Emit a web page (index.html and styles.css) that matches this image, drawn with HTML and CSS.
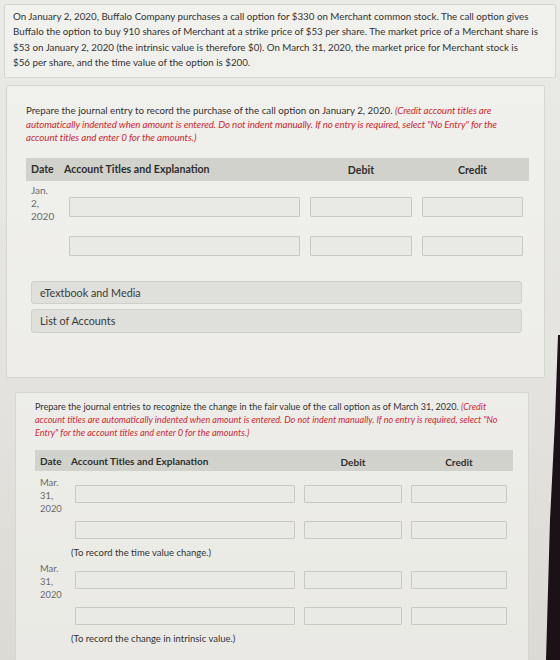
FILE: index.html
```html
<!DOCTYPE html>
<html lang="en">
<head>
    <meta charset="UTF-8">
    <meta name="viewport" content="width=device-width, initial-scale=1.0">
    <title>Call Option Journal Entries</title>
    <link rel="stylesheet" href="styles.css">
</head>
<body>

    <!-- Problem statement -->
    <div class="panel panel-intro">
        <p>On January 2, 2020, Buffalo Company purchases a call option for $330 on Merchant common stock. The call option gives Buffalo the option to buy 910 shares of Merchant at a strike price of $53 per share. The market price of a Merchant share is $53 on January 2, 2020 (the intrinsic value is therefore $0). On March 31, 2020, the market price for Merchant stock is $56&nbsp;per share, and the time value of the option is $200.</p>
    </div>

    <!-- Part 1: purchase of the option -->
    <div class="panel panel-part1">
        <p class="prompt">Prepare the journal entry to record the purchase of the call option on January 2, 2020. <em class="note">(Credit account titles are automatically indented when amount is entered. Do not indent manually. If no entry is required, select "No Entry" for the account titles and enter 0 for the amounts.)</em></p>

        <div class="journal">
            <div class="journal-head">
                <span>Date</span>
                <span class="col-account">Account Titles and Explanation</span>
                <span class="col-amount">Debit</span>
                <span class="col-amount">Credit</span>
            </div>
            <div class="journal-row">
                <div class="date">Jan.<br>2,<br>2020</div>
                <input class="field" type="text">
                <input class="field" type="text">
                <input class="field" type="text">
            </div>
            <div class="journal-row">
                <div class="date"></div>
                <input class="field" type="text">
                <input class="field" type="text">
                <input class="field" type="text">
            </div>
        </div>

        <div class="links">
            <div class="link-bar">eTextbook and Media</div>
            <div class="link-bar">List of Accounts</div>
        </div>
    </div>

    <!-- Part 2: change in fair value -->
    <div class="panel panel-part2">
        <p class="prompt">Prepare the journal entries to recognize the change in the fair value of the call option as of March 31, 2020. <em class="note">(Credit account titles are automatically indented when amount is entered. Do not indent manually. If no entry is required, select "No Entry" for the account titles and enter 0 for the amounts.)</em></p>

        <div class="journal">
            <div class="journal-head">
                <span>Date</span>
                <span class="col-account">Account Titles and Explanation</span>
                <span class="col-amount">Debit</span>
                <span class="col-amount">Credit</span>
            </div>
            <div class="journal-row">
                <div class="date">Mar.<br>31,<br>2020</div>
                <input class="field" type="text">
                <input class="field" type="text">
                <input class="field" type="text">
            </div>
            <div class="journal-row">
                <div class="date"></div>
                <input class="field" type="text">
                <input class="field" type="text">
                <input class="field" type="text">
            </div>
            <div class="entry-note">(To record the time value change.)</div>
            <div class="journal-row">
                <div class="date">Mar.<br>31,<br>2020</div>
                <input class="field" type="text">
                <input class="field" type="text">
                <input class="field" type="text">
            </div>
            <div class="journal-row">
                <div class="date"></div>
                <input class="field" type="text">
                <input class="field" type="text">
                <input class="field" type="text">
            </div>
            <div class="entry-note">(To record the change in intrinsic value.)</div>
        </div>
    </div>

    <!-- monitor bezel creeping in at the right edge -->
    <div class="bezel"></div>

</body>
</html>
```

FILE: styles.css
```css
/* General page */
html, body {
    height: 660px;
    overflow: hidden;
}

body {
    font-family: Lato, 'Open Sans', Arial, sans-serif;
    margin: 0;
    padding: 4px 0 0;
    color: #333331;
    background: linear-gradient(#eaeae7, #e4e3df 55%, #dbdad4);
    position: relative;
}

p {
    margin: 0;
}

/* Question panels */
.panel {
    background-color: rgba(246, 246, 243, 0.55);
    border: 1px solid #d6d6d1;
    border-radius: 2px;
    box-sizing: border-box;
}

.panel-intro {
    margin: 0 4px 0 4px;
    padding: 4px 16px 7px 8px;
    font-size: 9.75px;
    line-height: 15.3px;
}

.panel-part1 {
    margin: 7px 15px 0 6px;
    height: 293px;
    padding: 18px 15px 0 19px;
}

.panel-part2 {
    margin: 14px 31px 0 15px;
    height: 320px;
    padding: 7px 15px 0 19px;
}

.prompt {
    font-size: 9.75px;
    line-height: 13.5px;
    margin-right: 10px;
}

.panel-part2 .prompt {
    font-size: 9.05px;
    line-height: 13px;
    margin-right: 0;
}

.note {
    color: #cc2a30;
    font-style: italic;
    letter-spacing: -0.1px;
}

.panel-part2 .note {
    letter-spacing: 0;
}

/* Journal entry table */
.journal {
    --date-col: 28px;
    --debit-col: 102px;
    --credit-col: 101px;
    --gap: 10px;
    margin-top: 13px;
}

.panel-part2 .journal {
    --date-col: 26px;
    --debit-col: 98px;
    --credit-col: 96px;
    --gap: 9px;
    margin-top: 11px;
}

.journal-head,
.journal-row {
    display: grid;
    grid-template-columns: var(--date-col) 1fr var(--debit-col) var(--credit-col);
    column-gap: var(--gap);
    padding: 0 6px 0 5px;
}

.journal-head {
    background-color: #d2d2cd;
    height: 23px;
    align-items: center;
    font-size: 10.6px;
    font-weight: bold;
    color: #2e2e2c;
}

.panel-part2 .journal-head {
    height: 21px;
    font-size: 10px;
}

.journal-head .col-account {
    margin-left: -5px;
}

.panel-part2 .journal-head .col-account {
    margin-left: -4px;
}

.journal-head .col-amount {
    text-align: center;
    padding-top: 2px;
}

.journal-row {
    align-items: start;
}

.journal-row:nth-child(2) {
    margin-top: 3px;
}

.panel-part2 .journal-row:nth-child(2) {
    margin-top: 5px;
}

.date {
    font-size: 10px;
    line-height: 13px;
    color: #6a6a67;
    min-height: 39px;
}

.panel-part2 .date {
    font-size: 9.4px;
}

.journal-row .date:empty {
    min-height: 0;
}

.field {
    margin: 13px 0 0;
    height: 20px;
    box-sizing: border-box;
    width: 100%;
    background-color: #e9e9e5;
    border: 1px solid #c9c9c4;
    border-radius: 1px;
    padding: 0;
    font: inherit;
}

.journal-row + .journal-row .field {
    margin-top: 13px;
}

.panel-part2 .field {
    height: 18px;
    margin-top: 9px;
}

.panel-part2 .journal-row + .journal-row .field {
    margin-top: 6px;
}

.entry-note {
    font-size: 9.5px;
    line-height: 12px;
    padding: 8px 0 3px 36px;
}

/* eTextbook / List of Accounts bars */
.links {
    margin: 25px 7px 0 5px;
    display: flex;
    flex-direction: column;
    gap: 5px;
}

.link-bar {
    background-color: #dfdfdb;
    border: 1px solid #d0d0cb;
    border-radius: 3px;
    padding: 0 8px;
    height: 23px;
    line-height: 21px;
    box-sizing: border-box;
    font-size: 10.8px;
    color: #3a3a38;
}

.link-bar + .link-bar {
    height: 24px;
}

/* Dark screen edge */
.bezel {
    position: absolute;
    top: 0;
    right: 0;
    width: 20px;
    height: 660px;
    background-color: #1b1117;
    clip-path: polygon(18px 335px, 20px 335px, 20px 660px, 6px 660px, 10px 520px, 15px 420px);
}
```
